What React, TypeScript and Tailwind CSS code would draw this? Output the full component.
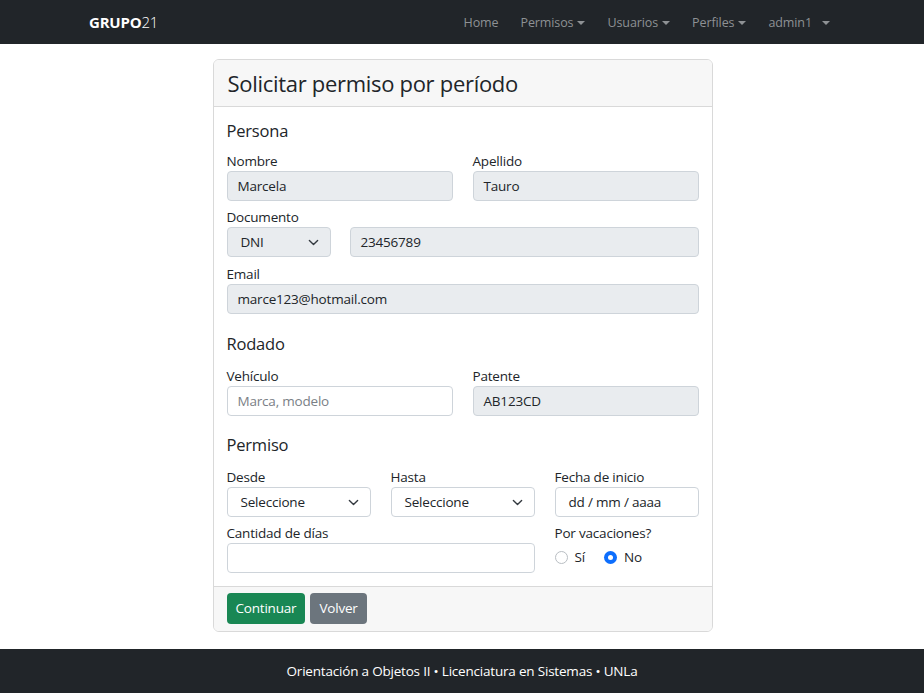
import React from 'react';

const font = { fontFamily: '"Open Sans", "Noto Sans", Arial, sans-serif' };

function Caret() {
  return <span className="ml-[4px] inline-block align-middle border-t-[4px] border-x-[4px] border-x-transparent border-t-current" />;
}

function NavItem({ label, caret, spaced }: { label: string; caret?: boolean; spaced?: boolean }) {
  return (
    <a className="px-[11px] pt-[2px] text-[12.5px] tracking-[-0.1px] text-[#8e9194] flex items-center cursor-pointer hover:text-[#bfc1c3]">
      <span>{label}</span>
      {caret && (spaced ? <span className="ml-[6px] flex"><Caret /></span> : <Caret />)}
    </a>
  );
}

function Label({ children }: { children: React.ReactNode }) {
  return <label className="block text-[13.5px] tracking-[-0.2px] leading-[20px] text-[#212529]">{children}</label>;
}

function Field({ value, disabled = true, placeholder }: { value?: string; disabled?: boolean; placeholder?: string }) {
  return (
    <div
      className={`h-[30px] rounded-[4px] border border-[#ced4da] px-[10px] flex items-center text-[13.5px] tracking-[-0.2px] ${
        disabled ? 'bg-[#e9ecef] text-[#212529]' : 'bg-white'
      }`}
    >
      {value ? <span>{value}</span> : <span className="text-[#7a8086]">{placeholder}</span>}
    </div>
  );
}

function Select({ value, disabled }: { value: string; disabled?: boolean }) {
  return (
    <div
      className={`h-[30px] rounded-[4px] border border-[#ced4da] pl-[13px] pr-[11px] flex items-center justify-between text-[13.5px] tracking-[-0.2px] text-[#212529] ${
        disabled ? 'bg-[#e9ecef]' : 'bg-white'
      }`}
    >
      <span>{value}</span>
      <svg width="11" height="11" viewBox="0 0 16 16" fill="none" stroke="#343a40" strokeWidth="2" strokeLinecap="round" strokeLinejoin="round">
        <path d="m2 5 6 6 6-6" />
      </svg>
    </div>
  );
}

function Section({ children }: { children: React.ReactNode }) {
  return <h5 className="text-[16.5px] tracking-[-0.2px] leading-[24px] text-[#212529]">{children}</h5>;
}

export default function App() {
  return (
    <div className="min-h-[693px] flex flex-col bg-white" style={font}>
      <nav className="h-[44px] bg-[#212529] flex items-center justify-between pl-[89px] pr-[83px]">
        <div className="text-[15px] tracking-[-0.2px] text-white">
          <span className="font-bold">GRUPO</span>
          <span className="font-light">21</span>
        </div>
        <div className="flex items-center">
          <NavItem label="Home" />
          <NavItem label="Permisos" caret />
          <NavItem label="Usuarios" caret />
          <NavItem label="Perfiles" caret />
          <NavItem label="admin1" caret spaced />
        </div>
      </nav>

      <main className="flex-1 pt-[15px] pb-[17px] pl-[1px]">
        <div className="mx-auto w-[500px] rounded-[6px] border border-[#d9d9d9] overflow-hidden">
          <div className="h-[47px] bg-[#f7f7f7] border-b border-[#d9d9d9] px-[14px] flex items-center">
            <h1 className="text-[22px] tracking-[-0.3px] text-[#212529]">Solicitar permiso por período</h1>
          </div>

          <div className="px-[13px] pt-[12px] pb-[13px]">
            <Section>Persona</Section>
            <div className="mt-[8px] grid grid-cols-2 gap-x-[20px]">
              <div>
                <Label>Nombre</Label>
                <Field value="Marcela" />
              </div>
              <div>
                <Label>Apellido</Label>
                <Field value="Tauro" />
              </div>
            </div>
            <div className="mt-[6px]">
              <Label>Documento</Label>
              <div className="grid grid-cols-[104px_1fr] gap-x-[19px]">
                <Select value="DNI" disabled />
                <Field value="23456789" />
              </div>
            </div>
            <div className="mt-[7px]">
              <Label>Email</Label>
              <Field value="marce123@hotmail.com" />
            </div>

            <div className="mt-[18px]">
              <Section>Rodado</Section>
            </div>
            <div className="mt-[10px] grid grid-cols-2 gap-x-[20px]">
              <div>
                <Label>Vehículo</Label>
                <Field disabled={false} placeholder="Marca, modelo" />
              </div>
              <div>
                <Label>Patente</Label>
                <Field value="AB123CD" />
              </div>
            </div>

            <div className="mt-[17px]">
              <Section>Permiso</Section>
            </div>
            <div className="mt-[10px] grid grid-cols-3 gap-x-[20px] gap-y-[6px]">
              <div>
                <Label>Desde</Label>
                <Select value="Seleccione" />
              </div>
              <div>
                <Label>Hasta</Label>
                <Select value="Seleccione" />
              </div>
              <div>
                <Label>Fecha de inicio</Label>
                <div className="h-[30px] rounded-[4px] border border-[#ced4da] bg-white pl-[13px] flex items-center text-[13.5px] tracking-[-0.2px] text-[#212529]">
                  dd / mm / aaaa
                </div>
              </div>
              <div className="col-span-2">
                <Label>Cantidad de días</Label>
                <div className="h-[30px] rounded-[4px] border border-[#ced4da] bg-white" />
              </div>
              <div>
                <Label>Por vacaciones?</Label>
                <div className="h-[28px] flex items-center text-[13.5px] tracking-[-0.2px] text-[#212529]">
                  <span className="w-[13px] h-[13px] rounded-full border border-[#b9bec3] bg-white" />
                  <span className="ml-[7px]">Sí</span>
                  <span className="ml-[19px] w-[13px] h-[13px] rounded-full bg-[#0d6efd] flex items-center justify-center">
                    <span className="w-[5px] h-[5px] rounded-full bg-white" />
                  </span>
                  <span className="ml-[7px]">No</span>
                </div>
              </div>
            </div>
          </div>

          <div className="bg-[#f7f7f7] border-t border-[#d9d9d9] px-[13px] pt-[6px] pb-[7px] flex gap-[5px]">
            <button className="h-[31px] px-[9px] rounded-[4px] bg-[#198754] text-white text-[13.5px] tracking-[-0.2px]">Continuar</button>
            <button className="h-[31px] px-[9px] rounded-[4px] bg-[#6c757d] text-white text-[13.5px] tracking-[-0.2px]">Volver</button>
          </div>
        </div>
      </main>

      <footer className="h-[44px] bg-[#212529] flex items-center justify-center text-[13.5px] tracking-[-0.2px] text-white">
        Orientación a Objetos II • Licenciatura en Sistemas • UNLa
      </footer>
    </div>
  );
}
